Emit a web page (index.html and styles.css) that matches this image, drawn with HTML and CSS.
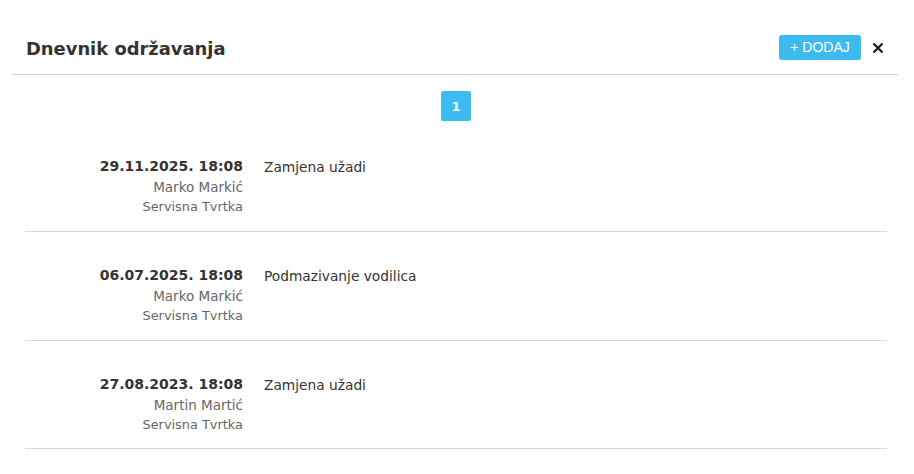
FILE: index.html
```html
<!DOCTYPE html>
<html lang="hr">
<head>
<meta charset="utf-8">
<title>Dnevnik održavanja</title>
<link rel="stylesheet" href="styles.css">
</head>
<body>
<div class="modal">
  <header class="head">
    <h1 class="title">Dnevnik održavanja</h1>
    <div class="actions">
      <button class="add">+ DODAJ</button>
      <button class="close" aria-label="Zatvori">
        <svg width="12" height="12" viewBox="0 0 12 12"><path d="M1.5 1.5L10.5 10.5M10.5 1.5L1.5 10.5" stroke="#222" stroke-width="2.4" stroke-linecap="butt"/></svg>
      </button>
    </div>
  </header>
  <div class="pager"><span class="page active">1</span></div>
  <ul class="log">
    <li class="entry">
      <div class="meta">
        <div class="date">29.11.2025. 18:08</div>
        <div class="who">Marko Markić</div>
        <div class="org">Servisna Tvrtka</div>
      </div>
      <div class="desc">Zamjena užadi</div>
    </li>
    <li class="entry">
      <div class="meta">
        <div class="date">06.07.2025. 18:08</div>
        <div class="who">Marko Markić</div>
        <div class="org">Servisna Tvrtka</div>
      </div>
      <div class="desc">Podmazivanje vodilica</div>
    </li>
    <li class="entry">
      <div class="meta">
        <div class="date">27.08.2023. 18:08</div>
        <div class="who">Martin Martić</div>
        <div class="org">Servisna Tvrtka</div>
      </div>
      <div class="desc">Zamjena užadi</div>
    </li>
  </ul>
</div>
</body>
</html>
```
FILE: styles.css
```css
* { box-sizing: border-box; }
html, body { margin: 0; padding: 0; background: #fff; }
body {
  font-family: "DejaVu Sans", Verdana, sans-serif;
  color: #333;
}
.modal { padding-top: 22px; }
.head {
  margin: 0 16px 0 12px;
  height: 53px;
  padding: 0 14px 1px 14px;
  display: flex;
  align-items: center;
  justify-content: space-between;
  border-bottom: 1px solid #d4d4d4;
}
.title {
  margin: 0;
  padding-top: 2px;
  font-size: 17.9px;
  font-weight: bold;
  color: #333;
}
.actions { display: flex; align-items: center; gap: 11px; }
.add {
  font-family: "Liberation Sans", Arial, sans-serif;
  font-size: 14px;
  color: #fff;
  background: #3dbaf0;
  border: 0;
  border-radius: 3px;
  height: 25px;
  width: 82px;
  padding: 0;
  line-height: 25px;
}
.close {
  background: none;
  border: 0;
  padding: 0;
  width: 12px;
  height: 12px;
  display: flex;
}
.pager {
  display: flex;
  justify-content: center;
  margin: 16px 27px 2px 25px;
}
.page {
  width: 30px;
  height: 30px;
  border-radius: 2px;
  background: #3dbaf0;
  color: #fff;
  font-size: 13px;
  font-weight: bold;
  display: flex;
  align-items: center;
  justify-content: center;
}
.log {
  list-style: none;
  margin: 0 27px 0 25px;
  padding: 0;
}
.entry {
  display: flex;
  padding: 32px 0 14px;
  border-bottom: 1px solid #d8d8d8;
}
.entry:last-child { padding-bottom: 13px; }
.meta {
  width: 218px;
  text-align: right;
}
.date {
  font-weight: bold;
  font-size: 14px;
  line-height: 22px;
  color: #333;
}
.who {
  font-size: 13.5px;
  line-height: 20px;
  color: #666;
}
.org {
  font-size: 12.9px;
  line-height: 20px;
  color: #666;
}
.desc {
  padding-left: 21px;
  padding-top: 1px;
  font-size: 13.75px;
  line-height: 22px;
  color: #333;
}
```
